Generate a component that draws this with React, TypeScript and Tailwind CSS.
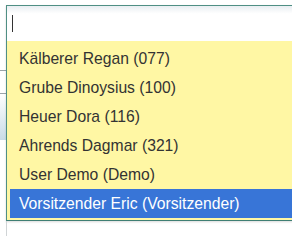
import React from "react";

const items = [
  "Kälberer Regan (077)",
  "Grube Dinoysius (100)",
  "Heuer Dora (116)",
  "Ahrends Dagmar (321)",
  "User Demo (Demo)",
  "Vorsitzender Eric (Vorsitzender)",
];

export default function App() {
  return (
    <div
      className="flex w-[292px] h-[236px] overflow-hidden bg-white"
      style={{ fontFamily: '"Liberation Sans", Arial, sans-serif' }}
    >
      {/* page behind the dropdown, visible at the left edge */}
      <div className="flex flex-col w-[6px] shrink-0">
        <div className="h-[70px]" />
        <div className="h-px bg-[#9aa3a8]" />
        <div className="h-[22px]" />
        <div className="h-px bg-[#9aa3a8]" />
        <div className="h-[46px] bg-[linear-gradient(#ffffff,#c9dbe6)]" />
      </div>

      <div className="flex flex-col shrink-0">
        <div className="mt-[5px] w-[320px] border border-[#4f8f84] border-b-[#3f7f74] shadow-[0_1px_2px_rgba(0,0,0,0.15)]">
          <div className="h-[35px] flex items-center pl-[5px] bg-[linear-gradient(#e9eef2_0%,#ffffff_22%)]">
            <div className="w-px h-[17px] bg-[#333]" />
          </div>
          <ul className="bg-[#fff7a4] pt-[3px] pb-[2px] pl-[3px]">
            {items.map((t, i) => {
              const sel = i === items.length - 1;
              return (
                <li
                  key={t}
                  className={
                    "h-[29px] flex items-center pl-[9px] text-[15.7px] leading-none whitespace-nowrap " +
                    (sel ? "bg-[#3875d7] text-white" : "text-[#333]")
                  }
                >
                  {t}
                </li>
              );
            })}
          </ul>
        </div>
        <div className="flex-1 w-px bg-[#d0d4d6]" />
      </div>
    </div>
  );
}
